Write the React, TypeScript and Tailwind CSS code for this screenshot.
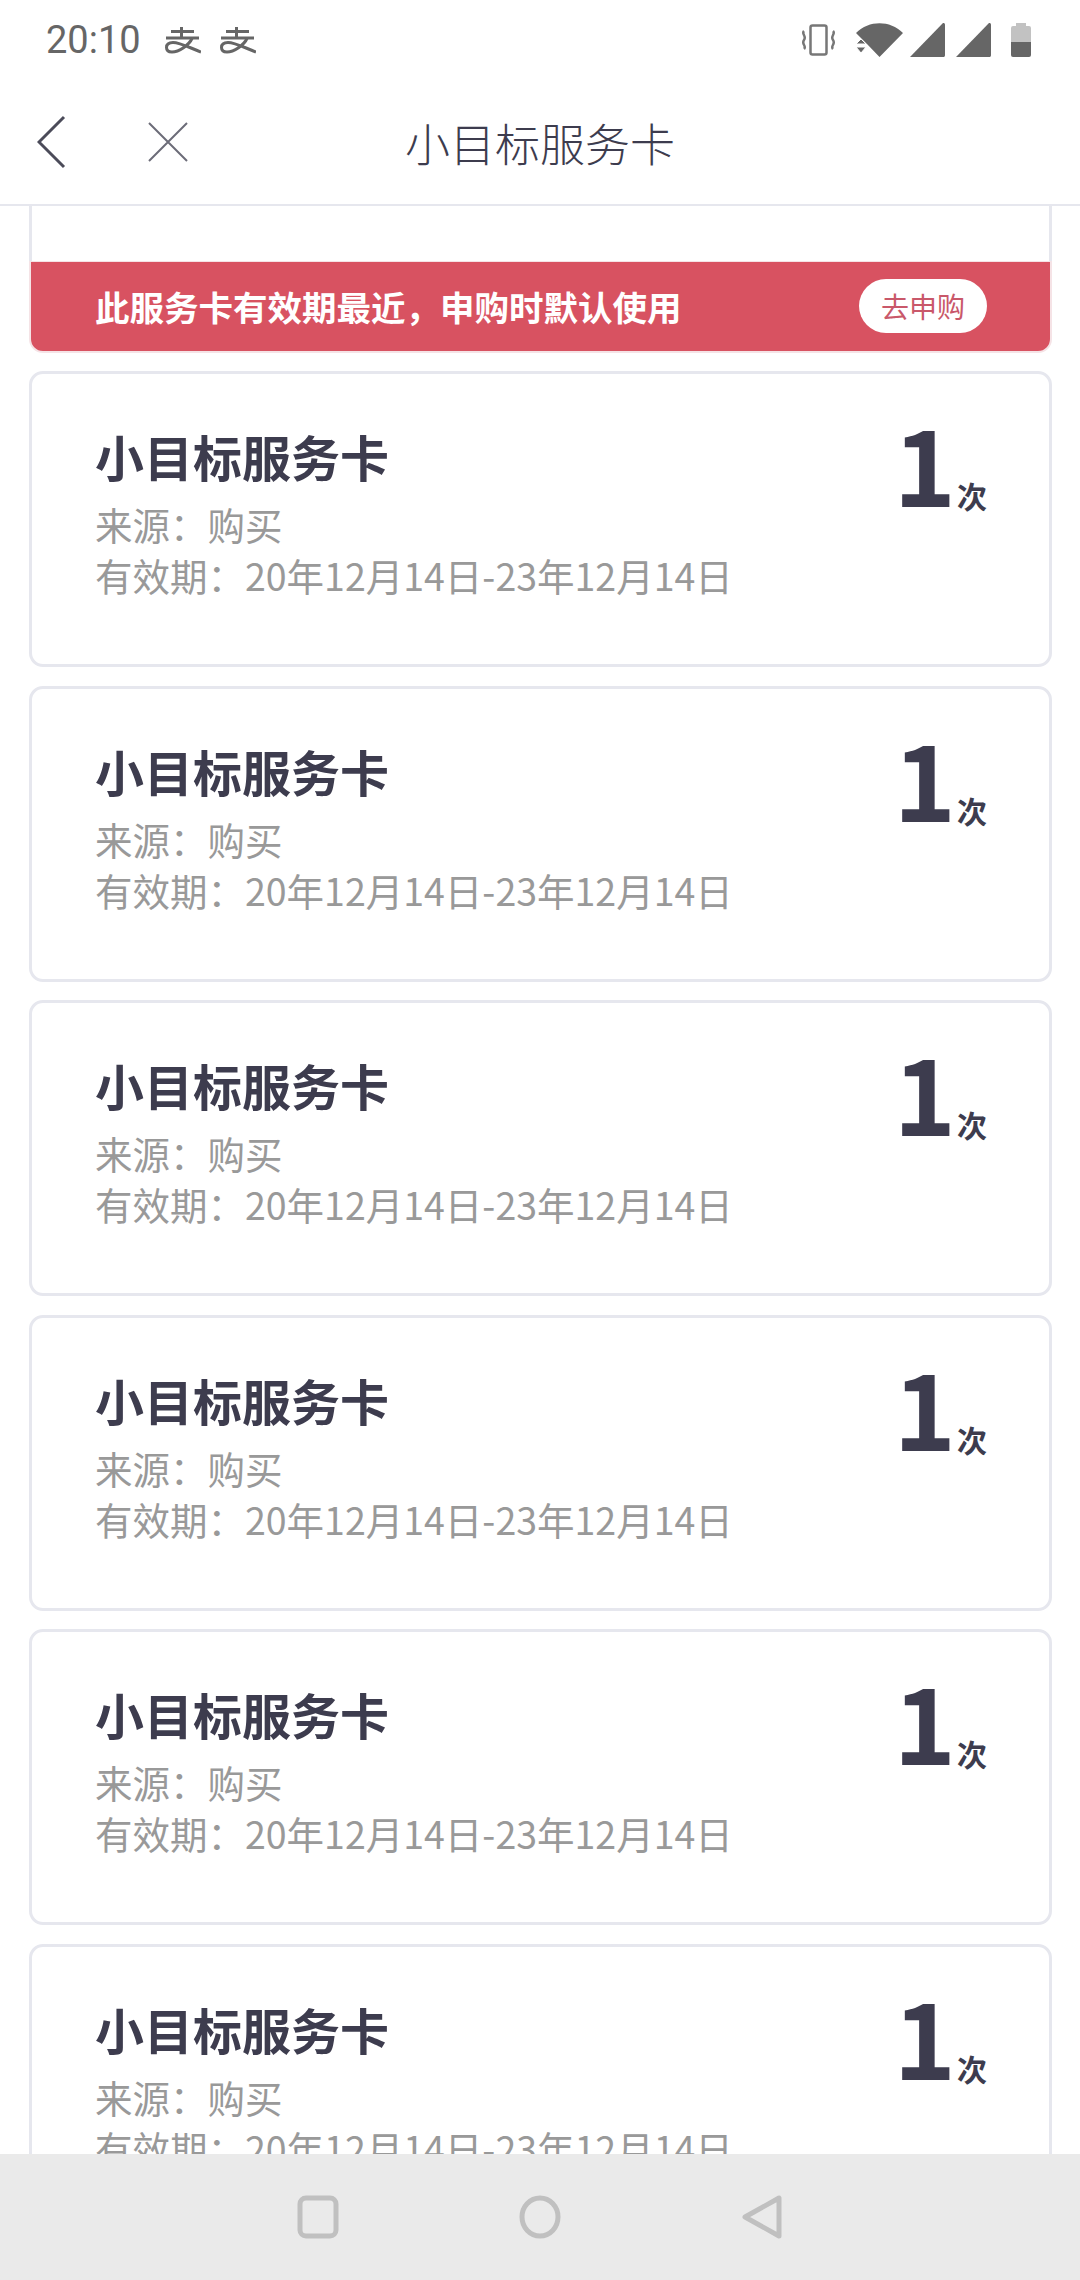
import React from 'react';

const CJK = "font-['Noto_Sans_CJK_SC','Noto_Sans',sans-serif]";

// Alipay notification icon
const AlipayIcon = () => (
    <svg width="36" height="27" viewBox="0 0 36 27" fill="none" stroke="#666666" strokeWidth="3">
        <path d="M6 4.500h23M1 11h33M16.500 0v11" />
        <path d="M27 11.500C24 18 14 25 7 25c-4.500 0-5.500-2.500-5.500-4.500 0-3.500 3-5 6.500-5 7 0 16 5 28 9.500" />
    </svg>
);

const VibrateIcon = () => (
    <svg width="35" height="32" viewBox="0 0 35 32" fill="none" stroke="#777777" strokeWidth="2.500">
        <rect x="9.500" y="1.500" width="16" height="29" rx="2" />
        <path d="M3 7c-3 3 3 5 0 9s3 6 0 9M32 7c3 3-3 5 0 9s-3 6 0 9" />
    </svg>
);

const WifiIcon = () => (
    <svg width="47" height="34" viewBox="0 0 47 34" fill="#666666">
        <path d="M0 10C13-3 34-3 47 10L23.500 34 11 21z" />
        <path d="M0 21l5-5 5 5zM0 24h10l-5 6z" stroke="#ffffff" strokeWidth="1" />
    </svg>
);

const SignalIcon = () => (
    <svg width="35" height="34" viewBox="0 0 35 34" fill="#666666">
        <path d="M33 0c1.500 0 2 .5 2 2v30c0 1.500-.5 2-2 2H0z" />
    </svg>
);

const BatteryIcon = () => (
    <svg width="20" height="34" viewBox="0 0 20 34">
        <path d="M5 0h10v3h3a2 2 0 0 1 2 2V19H0V5a2 2 0 0 1 2-2h3z" fill="#c2c2c2" />
        <path d="M0 19h20v13a2 2 0 0 1-2 2H2a2 2 0 0 1-2-2z" fill="#666666" />
    </svg>
);

const StatusBar = () => (
    <div className="h-[72px] shrink-0 flex items-center justify-between pt-[8px] pl-[46px] pr-[49px] bg-white">
        <div className="flex items-center">
            <span className="font-['Roboto',sans-serif] text-[38px] leading-none text-[#666666]">20:10</span>
            <div className="flex gap-[19px] ml-[24px]">
                <AlipayIcon />
                <AlipayIcon />
            </div>
        </div>
        <div className="flex items-center">
            <VibrateIcon />
            <div className="ml-[20px]"><WifiIcon /></div>
            <div className="ml-[7px]"><SignalIcon /></div>
            <div className="ml-[11px]"><SignalIcon /></div>
            <div className="ml-[20px]"><BatteryIcon /></div>
        </div>
    </div>
);

const Header = () => (
    <div className="relative h-[134px] shrink-0 flex items-center justify-center pt-[8px] bg-white border-b-2 border-[#e6e7ee]">
        <div className="absolute left-[37px] top-[8px] bottom-0 flex items-center gap-[80px]">
            <svg width="30" height="56" viewBox="0 0 30 56" fill="none" stroke="#4b4b59" strokeWidth="3">
                <path d="M27 3L2 28l25 25" />
            </svg>
            <svg width="42" height="42" viewBox="0 0 42 42" fill="none" stroke="#6c6c78" strokeWidth="2">
                <path d="M2 2l38 38M40 2L2 40" />
            </svg>
        </div>
        <span className={`${CJK} text-[45px] leading-none font-light text-[#3d3c4e]`}>小目标服务卡</span>
    </div>
);

const ServiceCard = () => (
    <div className="h-[296px] shrink-0 flex justify-between border-[3px] border-[#e6e7ee] rounded-[14px] bg-white pl-[63px] pr-[62px] pt-[52px]">
        <div>
            <div className={`${CJK} text-[49px] leading-[60px] font-bold text-[#3d3c4e]`}>小目标服务卡</div>
            <div className={`${CJK} text-[37.500px] leading-[51px] text-[#999999] mt-[12px]`}>来源：购买</div>
            <div className={`${CJK} text-[37.500px] leading-[51px] text-[#999999]`}>有效期：20年12月14日-23年12月14日</div>
        </div>
        <div className="flex items-start">
            <span className={`${CJK} text-[106px] leading-[110px] font-bold text-[#3d3c4e] -mt-[20px]`}>1</span>
            <span className={`${CJK} text-[30px] leading-none font-bold text-[#3d3c4e] mt-[54px] ml-[1px]`}>次</span>
        </div>
    </div>
);

const NavBar = () => (
    <div className="h-[126px] shrink-0 flex items-center justify-center gap-[180px] bg-[#eaeaea]">
        <svg width="42" height="44" viewBox="0 0 42 44" fill="none" stroke="#c0c0c0" strokeWidth="5">
            <rect x="3" y="3" width="36" height="38" rx="6" />
        </svg>
        <svg width="42" height="44" viewBox="0 0 42 44" fill="none" stroke="#c0c0c0" strokeWidth="5">
            <ellipse cx="21" cy="22" rx="18" ry="19" />
        </svg>
        <svg width="42" height="44" viewBox="0 0 42 44" fill="none" stroke="#c0c0c0" strokeWidth="5" strokeLinejoin="round">
            <path d="M38 3v38L4 22z" />
        </svg>
    </div>
);

export default function App() {
    return (
        <div className="w-[1080px] h-[2280px] flex flex-col overflow-hidden bg-white">
            <StatusBar />
            <Header />
            <div className="flex-1 min-h-0 overflow-hidden pl-[29px] pr-[28px] flex flex-col gap-[18.500px]">
                {/* first card is scrolled off, only the bottom banner is left */}
                <div className="h-[146.500px] shrink-0 flex flex-col">
                    <div className="flex-1 border-x-[3px] border-[#e6e7ee]" />
                    <div className="h-[92px] flex items-center justify-between bg-[#d85261] border-x-2 border-b-2 border-t border-[#f5e3e6] rounded-b-[14px] pl-[64px] pr-[63px]">
                        <span className={`${CJK} text-[34.500px] leading-none font-bold text-white`}>此服务卡有效期最近，申购时默认使用</span>
                        <span className={`${CJK} w-[128px] h-[54px] rounded-full bg-white flex items-center justify-center text-[28px] text-[#c9586a]`}>去申购</span>
                    </div>
                </div>
                {[1, 2, 3, 4, 5, 6].map((i) => (
                    <ServiceCard key={i} />
                ))}
            </div>
            <NavBar />
        </div>
    );
}
